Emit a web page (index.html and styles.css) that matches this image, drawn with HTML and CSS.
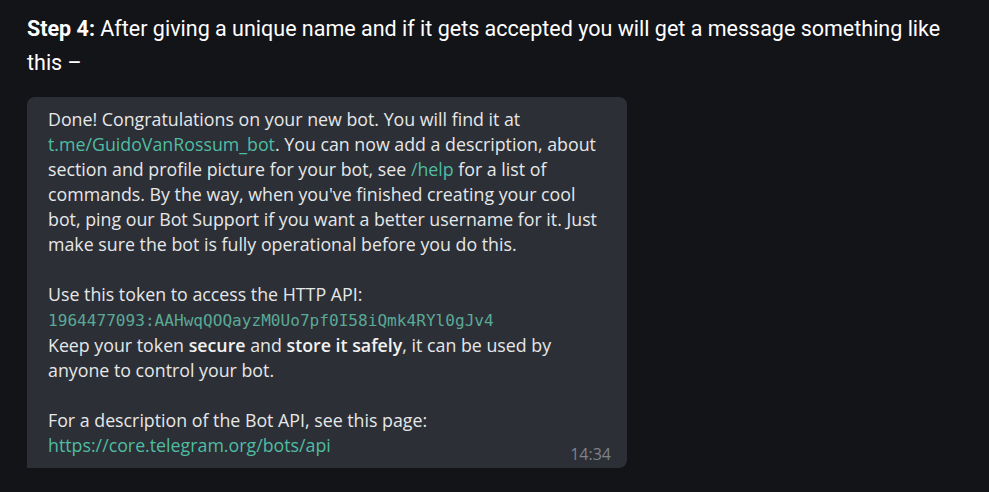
FILE: index.html
```html
<!DOCTYPE html>
<html lang="en">
<head>
<meta charset="utf-8">
<title>Step 4</title>
<link rel="stylesheet" href="styles.css">
</head>
<body>
<main class="article">
  <p class="step"><strong>Step 4:</strong> After giving a unique name and if it gets accepted you will get a message something like this –</p>
  <div class="bubble">
    <p class="msg">Done! Congratulations on your new bot. You will find it at<br><span class="link">t.me/GuidoVanRossum_bot</span>. You can now add a description, about<br>section and profile picture for your bot, see <span class="link">/help</span> for a list of<br>commands. By the way, when you've finished creating your cool<br>bot, ping our Bot Support if you want a better username for it. Just<br>make sure the bot is fully operational before you do this.</p>
    <p class="msg">Use this token to access the HTTP API:<br><code class="token">1964477093:AAHwqQOQayzM0Uo7pf0I58iQmk4RYl0gJv4</code><br>Keep your token <b>secure</b> and <b>store it safely</b>, it can be used by<br>anyone to control your bot.</p>
    <p class="msg">For a description of the Bot API, see this page:<br><span class="link">https://core.telegram.org/bots/api</span></p>
    <span class="time">14:34</span>
  </div>
</main>
</body>
</html>
```
FILE: styles.css
```css
html, body {
  margin: 0;
  padding: 0;
  background: #131418;
}
.article {
  padding: 12px 27px 0 27px;
}
.step {
  margin: 0;
  color: #ffffff;
  font-family: "Roboto", "Noto Sans", sans-serif;
  font-size: 21.5px;
  line-height: 34px;
  max-width: 920px;
}
.step strong {
  font-weight: 700;
}
.bubble {
  position: relative;
  margin-top: 17px;
  width: 600px;
  box-sizing: border-box;
  padding: 10px 16px 10px 21px;
  background: #2c2f35;
  border-radius: 8px 8px 8px 0;
  font-family: "Open Sans", "Noto Sans", sans-serif;
  font-size: 17.8px;
  line-height: 25px;
  color: #e6e7e9;
  white-space: nowrap;
}
.msg {
  margin: 0 0 25px 0;
}
.msg:last-of-type {
  margin-bottom: 0;
}
.msg b {
  font-weight: 600;
  color: #f2f2f2;
}
.link {
  color: #4fbda3;
}
.token {
  font-family: "DejaVu Sans Mono", monospace;
  font-size: 16.1px;
  color: #5aa997;
}
.time {
  position: absolute;
  right: 16px;
  bottom: 4px;
  font-size: 16px;
  line-height: 20px;
  color: #7c838c;
}
```
